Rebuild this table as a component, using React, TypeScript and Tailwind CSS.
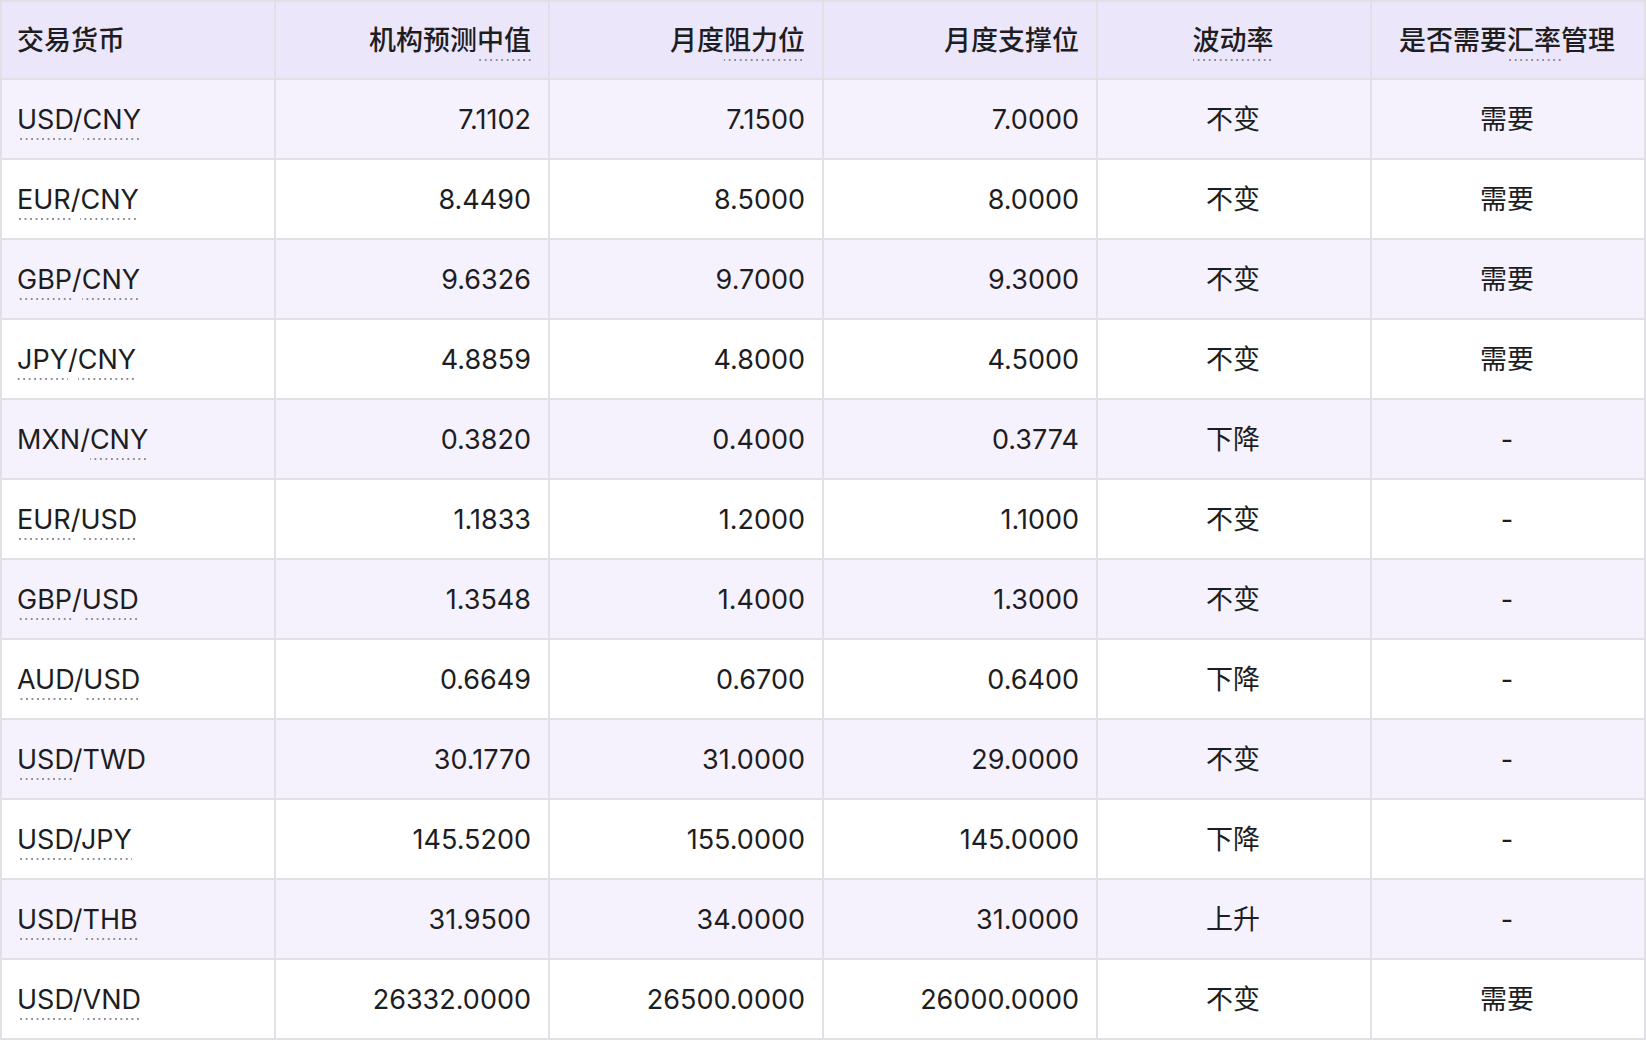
import React from 'react';

// 汇率预测表
type Row = {
    pair: [string, string];
    ul: [boolean, boolean];
    mid: string;
    res: string;
    sup: string;
    vol: string;
    manage: string;
};

const rows: Row[] = [
    { pair: ['USD', 'CNY'], ul: [true, true], mid: '7.1102', res: '7.1500', sup: '7.0000', vol: '不变', manage: '需要' },
    { pair: ['EUR', 'CNY'], ul: [true, true], mid: '8.4490', res: '8.5000', sup: '8.0000', vol: '不变', manage: '需要' },
    { pair: ['GBP', 'CNY'], ul: [true, true], mid: '9.6326', res: '9.7000', sup: '9.3000', vol: '不变', manage: '需要' },
    { pair: ['JPY', 'CNY'], ul: [true, true], mid: '4.8859', res: '4.8000', sup: '4.5000', vol: '不变', manage: '需要' },
    { pair: ['MXN', 'CNY'], ul: [false, true], mid: '0.3820', res: '0.4000', sup: '0.3774', vol: '下降', manage: '-' },
    { pair: ['EUR', 'USD'], ul: [true, true], mid: '1.1833', res: '1.2000', sup: '1.1000', vol: '不变', manage: '-' },
    { pair: ['GBP', 'USD'], ul: [true, true], mid: '1.3548', res: '1.4000', sup: '1.3000', vol: '不变', manage: '-' },
    { pair: ['AUD', 'USD'], ul: [true, true], mid: '0.6649', res: '0.6700', sup: '0.6400', vol: '下降', manage: '-' },
    { pair: ['USD', 'TWD'], ul: [true, false], mid: '30.1770', res: '31.0000', sup: '29.0000', vol: '不变', manage: '-' },
    { pair: ['USD', 'JPY'], ul: [true, true], mid: '145.5200', res: '155.0000', sup: '145.0000', vol: '下降', manage: '-' },
    { pair: ['USD', 'THB'], ul: [true, true], mid: '31.9500', res: '34.0000', sup: '31.0000', vol: '上升', manage: '-' },
    { pair: ['USD', 'VND'], ul: [true, true], mid: '26332.0000', res: '26500.0000', sup: '26000.0000', vol: '不变', manage: '需要' },
];

// dotted underline, like a glossary term
function Term({ children }: { children: React.ReactNode }) {
    return (
        <span className="pb-[4px] bg-[linear-gradient(to_right,#8e8e96_2px,transparent_2px)] bg-[length:5.5px_2px] bg-repeat-x bg-bottom">
            {children}
        </span>
    );
}

const th = 'border-2 border-[#e1e0e7] pl-[15px] pr-[17px] font-medium';
const td = 'border-2 border-[#e1e0e7] pl-[15px] pr-[17px] font-normal';

export default function App() {
    return (
        <div
            className="w-[1646px] h-[1046px] bg-white text-[#1d1d22] text-[27px] leading-none"
            style={{ fontFamily: 'Inter, "Noto Sans CJK SC", sans-serif' }}
        >
            <table className="w-full table-fixed border-collapse">
                <thead>
                    <tr className="h-[78px] bg-[#ebe6fa]">
                        <th className={`${th} text-left`}>交易货币</th>
                        <th className={`${th} text-right`}>机构预测<Term>中值</Term></th>
                        <th className={`${th} text-right`}>月度<Term>阻力位</Term></th>
                        <th className={`${th} text-right`}>月度支撑位</th>
                        <th className={`${th} text-center`}><Term>波动率</Term></th>
                        <th className={`${th} text-center`}>是否需要<Term>汇率</Term>管理</th>
                    </tr>
                </thead>
                <tbody>
                    {rows.map((r, i) => (
                        <tr key={i} className={i % 2 === 0 ? 'h-[80px] bg-[#f5f2fe]' : 'h-[80px] bg-white'}>
                            <td className={`${td} text-left`}>
                                {r.ul[0] ? <Term>{r.pair[0]}</Term> : r.pair[0]}/
                                {r.ul[1] ? <Term>{r.pair[1]}</Term> : r.pair[1]}
                            </td>
                            <td className={`${td} text-right`}>{r.mid}</td>
                            <td className={`${td} text-right`}>{r.res}</td>
                            <td className={`${td} text-right`}>{r.sup}</td>
                            <td className={`${td} text-center`}>{r.vol}</td>
                            <td className={`${td} text-center`}>{r.manage}</td>
                        </tr>
                    ))}
                </tbody>
            </table>
        </div>
    );
}
